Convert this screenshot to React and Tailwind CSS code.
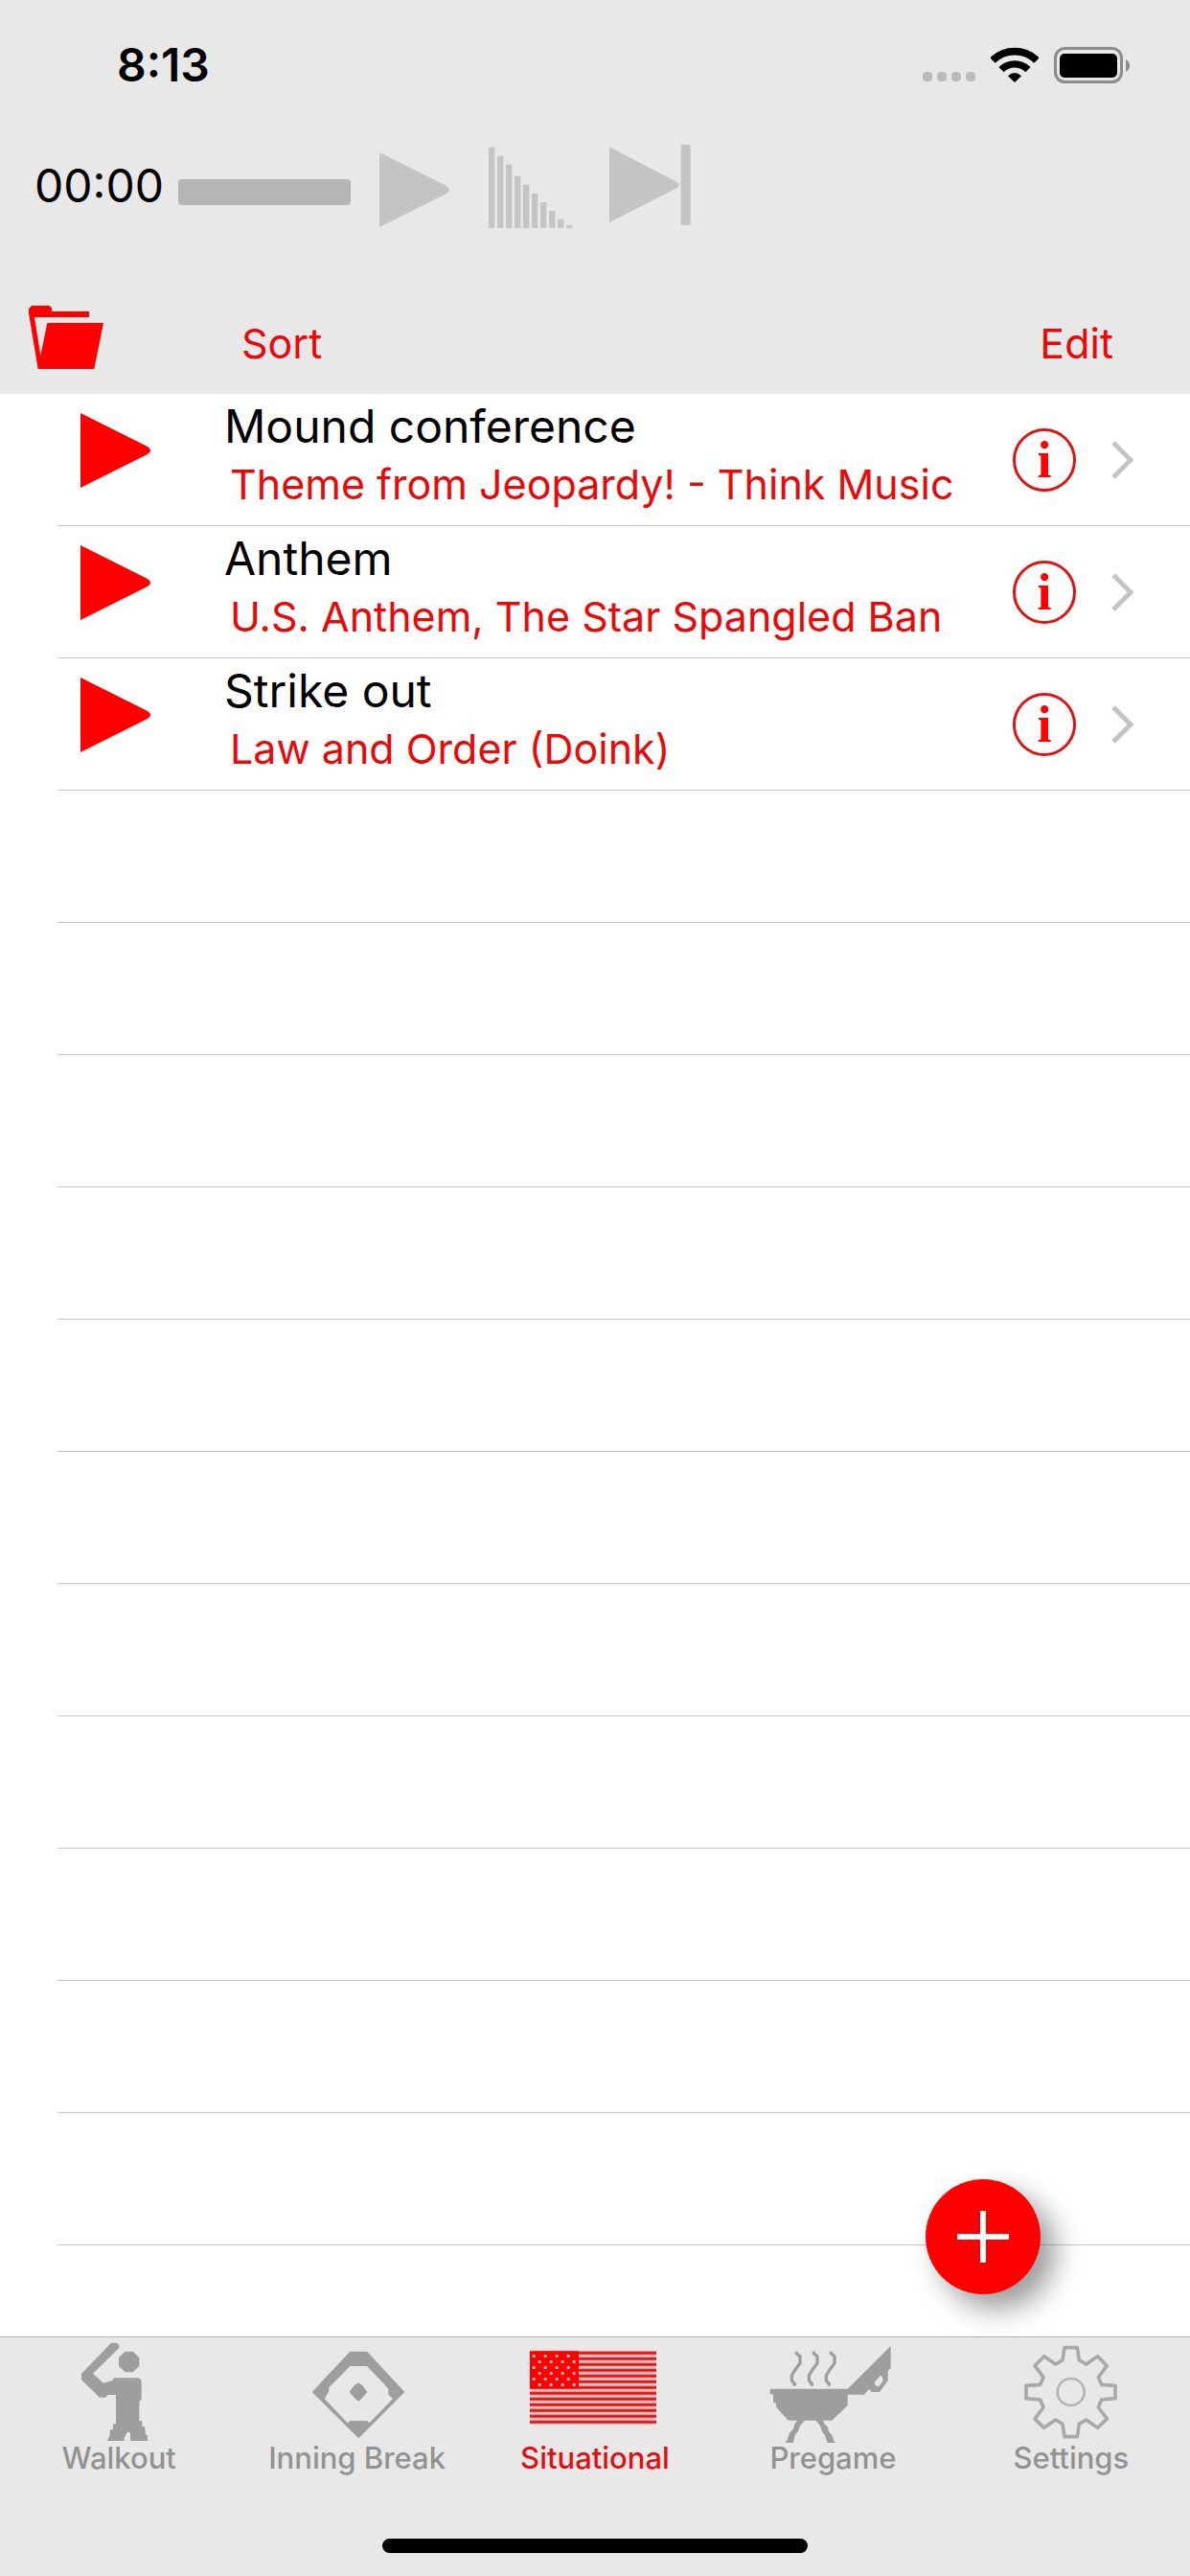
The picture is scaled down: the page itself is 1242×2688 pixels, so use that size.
import { useState } from "react";

const SONGS = [
    { id: 1, title: "Mound conference", track: "Theme from Jeopardy! - Think Music" },
    { id: 2, title: "Anthem", track: "U.S. Anthem, The Star Spangled Ban" },
    { id: 3, title: "Strike out", track: "Law and Order (Doink)" },
];

const EMPTY_ROWS = 11;

const StatusIcons = () => (
    <div className="flex items-center">
        <svg className="w-[55px] h-[10px] mt-6" viewBox="0 0 55 10" fill="#bcbcbc">
            {[0, 15, 30, 45].map((x) => (
                <rect key={x} x={x} width="10" height="10" rx="4" />
            ))}
        </svg>
        <svg className="w-[50px] h-[38px] ml-4" viewBox="395 144 150 114" fill="none" stroke="#000">
            <path d="M401 186A99 99 0 0 1 539 186" strokeWidth="23" />
            <path d="M428 215A60 60 0 0 1 512 215" strokeWidth="22" />
            <path d="M470 255L449 235Q470 215 491 235Z" fill="#000" stroke="none" />
        </svg>
        <svg className="w-[80px] h-[38px] ml-4" viewBox="0 0 80 38">
            <rect x="1.5" y="1.5" width="69" height="35" rx="10" fill="none" stroke="#8c8c8c" strokeWidth="3" />
            <rect x="6" y="7" width="60" height="25" rx="5" fill="#000" />
            <path d="M75 13Q79 15 79 19.500T75 26Z" fill="#8c8c8c" />
        </svg>
    </div>
);

const PlayIcon = () => (
    <svg className="w-[74px] h-[78px]" viewBox="0 0 74 78" fill="currentColor">
        <path d="M0 0L68 34Q78 39 68 44L0 78Z" />
    </svg>
);

const FadeIcon = () => (
    <svg className="w-[88px] h-[88px]" viewBox="480 87 264 264" fill="currentColor">
        {[98, 125, 152, 188, 215, 243, 270, 297, 323, 342].map((y, i) => (
            <rect key={y} x={480 + i * 27} y={y} width="19" height={351 - y} />
        ))}
    </svg>
);

const NextIcon = () => (
    <svg className="w-[86px] h-[88px]" viewBox="858 87 258 264" fill="currentColor">
        <path d="M858 97L1066 205Q1086 216 1066 227L858 334Z" />
        <rect x="1082" y="90" width="30" height="252" rx="4" />
    </svg>
);

const FolderIcon = () => (
    <svg className="w-[78px] h-[66px]" viewBox="90 114 234 198" fill="#f00">
        <path d="M90 124L99 114H155L162 121V132H279V150H108L127 270L148 168H324L295 312H119L90 138Z" />
    </svg>
);

const WalkoutIcon = () => (
    <svg className="w-[140px] h-[110px]" viewBox="162 57 420 330" fill="currentColor">
        <path d="M348 74H366L373 82V90L291 170L324 200L352 192L356 184H434L443 192V250L436 258V318H445V336H453L456 362H462V381H408V358L402 352L396 358L389 372V381H336L344 364V346H353L355 328H363V237H338L330 245H312L255 190V171Z" />
        <path d="M392 101H416L436 120V147L416 166H392L372 147V120Z" />
    </svg>
);

const InningIcon = () => (
    <svg className="w-[140px] h-[110px]" viewBox="906 57 420 330" fill="currentColor">
        <path
            fillRule="evenodd"
            d="M1093 101H1146L1264 228L1120 373L974 228ZM1093 147L1040 201L1027 213V226L1013 249L1085 325L1093 318H1146L1154 325L1227 249L1213 237V220L1198 201L1146 147Z"
        />
        <path d="M1120 199L1132 208L1147 228L1132 246L1120 257L1106 246L1091 228L1106 208Z" />
    </svg>
);

const FlagIcon = () => (
    <svg className="w-[140px] h-[110px]" viewBox="303 57 420 330">
        <rect x="309" y="100" width="396" height="228" fill="#f8dcdc" />
        {Array.from({ length: 13 }, (_, i) => (
            <g key={i}>
                <rect x="309" y={100 + i * 18} width="396" height="12" fill="#ff5c5c" />
                <rect x="309" y={103 + i * 18} width="396" height="6" fill="#d31212" />
            </g>
        ))}
        <rect x="309" y="100" width="153" height="117" fill="#f00" />
        {[0, 1, 2, 3, 4, 5].map((row) =>
            [0, 1, 2, 3].map((col) => (
                <rect
                    key={`${row}-${col}`}
                    x={317 + col * 36 + (row % 2) * 18}
                    y={111 + row * 18}
                    width="9"
                    height="9"
                    rx="3"
                    fill="#ffc9c9"
                />
            ))
        )}
    </svg>
);

const PregameIcon = () => (
    <svg className="w-[140px] h-[110px]" viewBox="58 57 420 330" fill="currentColor">
        <path d="M72 218H315L450 84V154L441 162V193L415 228H390L382 219L367 236H315V270L266 317H238L243 330L252 336L256 352L268 366L272 382L280 390H253L244 364L235 352L229 334L216 317H181L166 334L160 352L151 360L144 389H117L126 378L133 356L144 346L150 326L158 317H129L91 275V264L82 260V236L72 234Z" />
        <path d="M405 210L398 199L418 176L425 182V196L413 210Z" fill="#e8e8e8" />
        <g fill="none" stroke="currentColor" strokeWidth="10">
            {[0, 54, 108].map((x) => (
                <path key={x} d={`M${155 + x} 101V107L${166 + x} 116V138L${151 + x} 158L${140 + x} 176V192L${149 + x} 202V209`} />
            ))}
        </g>
    </svg>
);

const SettingsIcon = () => (
    <svg className="w-[140px] h-[110px]" viewBox="803 57 420 330" fill="none" stroke="#a9a9a9" strokeLinejoin="round">
        <path
            strokeWidth="11"
            d="M992 89H1032L1038 128L1060 141L1096 116L1125 146L1098 182L1108 205L1151 208V248L1108 252L1098 276L1125 312L1096 340L1060 315L1038 328L1032 368H992L986 328L964 315L928 340L899 312L926 276L916 252L872 248V208L916 205L926 182L899 146L928 116L964 141L986 128Z"
        />
        <circle cx="1012" cy="228" r="42" strokeWidth="8" stroke="#b4b4b4" />
    </svg>
);

const TABS = [
    { name: "Walkout", Icon: WalkoutIcon },
    { name: "Inning Break", Icon: InningIcon },
    { name: "Situational", Icon: FlagIcon },
    { name: "Pregame", Icon: PregameIcon },
    { name: "Settings", Icon: SettingsIcon },
];

const SongRow = ({ song }) => (
    <li className="flex h-[138px] ml-[60px] border-b border-[#c6c6c6]">
        <button className="text-[#f00] ml-6 mt-5 self-start shrink-0" aria-label={`Play ${song.title}`}>
            <PlayIcon />
        </button>
        <div className="flex-1 min-w-0 ml-[76px] pt-1">
            <div className="text-[48px] leading-[60px] text-black whitespace-nowrap">{song.title}</div>
            <div className="text-[43px] leading-[60px] text-[#e60a0a] ml-1.5 whitespace-nowrap">{song.track}</div>
        </div>
        <div className="flex items-center shrink-0 ml-[62px] mr-[58px]">
            <button
                className="w-[66px] h-[66px] rounded-full border-3 border-[#e01212] text-[#f00] font-['Liberation_Serif',serif] font-bold text-[54px] leading-[56px] flex items-center justify-center"
                aria-label={`About ${song.title}`}>
                i
            </button>
            <svg className="w-[25px] h-[40px] ml-9" viewBox="0 0 25 40" fill="none" stroke="#c4c4c6" strokeWidth="5">
                <path d="M3 2L21 20L3 38" />
            </svg>
        </div>
    </li>
);

const App = () => {
    const [activeTab, setActiveTab] = useState("Situational");

    return (
        <div className="min-h-screen flex flex-col bg-white font-[Inter,sans-serif]">
            <header className="bg-[#e8e8e8]">
                <div className="h-33 pt-1 pl-[122px] pr-[62px] flex items-center justify-between">
                    <span className="text-[48px] leading-[60px] font-semibold text-black">8:13</span>
                    <StatusIcons />
                </div>
                <div className="h-33 pl-9 flex items-center text-[#c4c4c4]">
                    <span className="text-[48px] leading-[60px] text-black pb-2 w-[150px] whitespace-nowrap">00:00</span>
                    <div className="w-[180px] h-[27px] mt-1 rounded-sm bg-[#b5b5b5]" />
                    <button className="ml-[30px]" aria-label="Play">
                        <PlayIcon />
                    </button>
                    <button className="ml-10 pb-2" aria-label="Fade out">
                        <FadeIcon />
                    </button>
                    <button className="ml-[38px] pb-2" aria-label="Next">
                        <NextIcon />
                    </button>
                </div>
                <div className="h-[147px] pt-10 pl-[30px] pr-[80px] flex items-center text-[43px] leading-[60px] text-[#e60a0a]">
                    <button className="pb-3" aria-label="Folders">
                        <FolderIcon />
                    </button>
                    <button className="ml-[144px]">Sort</button>
                    <button className="ml-auto">Edit</button>
                </div>
            </header>

            <main className="flex-1 relative">
                <ul>
                    {SONGS.map((song) => (
                        <SongRow key={song.id} song={song} />
                    ))}
                    {Array.from({ length: EMPTY_ROWS }, (_, i) => (
                        <li key={i} aria-hidden="true" className="h-[138px] ml-[60px] border-b border-[#c6c6c6]" />
                    ))}
                </ul>
                <button
                    className="absolute right-[156px] bottom-11 w-[120px] h-[120px] rounded-full bg-[#f00] shadow-[15px_15px_30px_rgba(0,0,0,0.4)] flex items-center justify-center"
                    aria-label="Add">
                    <svg className="w-[54px] h-[54px]" viewBox="0 0 54 54" stroke="#fff" strokeWidth="6">
                        <path d="M27 0V54M0 27H54" />
                    </svg>
                </button>
            </main>

            <footer className="relative bg-[#e8e8e8] border-t border-[#b2b2b2] pb-6">
                <nav className="flex">
                    {TABS.map(({ name, Icon }) => (
                        <button
                            key={name}
                            onClick={() => setActiveTab(name)}
                            className={`flex-1 basis-0 flex flex-col items-center ${activeTab === name ? "text-[#e01010]" : "text-[#9e9e9e]"}`}>
                            <Icon />
                            <span className={`text-[31px] leading-8 font-medium whitespace-nowrap ${activeTab === name ? "" : "text-[#929292]"}`}>
                                {name}
                            </span>
                        </button>
                    ))}
                </nav>
                <div className="w-[444px] h-[15px] mt-17 mx-auto rounded-full bg-black" />
            </footer>
        </div>
    );
};

export default App;
